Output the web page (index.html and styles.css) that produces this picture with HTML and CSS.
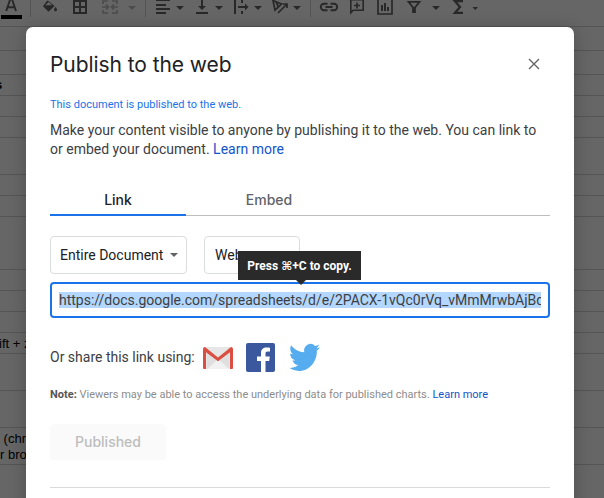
FILE: index.html
```html
<!DOCTYPE html>
<html lang="en">
<head>
<meta charset="utf-8">
<title>Publish to the web</title>
<link rel="stylesheet" href="styles.css">
</head>
<body>
<div class="sheet">
  <div class="toolbar">
    <svg width="30" viewBox="0 0 30 26"><path d="M6.2 11 10.3-1h1.6L16 11M7.8 7.2h6.6" fill="none" stroke="#282828" stroke-width="1.9"/><path d="M1 15h21v4H1z" fill="#000"/></svg>
    <svg width="36" viewBox="30 0 36 26"><path d="M30 0h1v17h-1z" fill="#555"/><path d="M46-1 54.5 6 48.5 11.8 43 6.2 48-.5z"/><path d="m45.2 5.3 3.5-3.4 3.3 3.4z" fill="#666"/><path d="M55.5 7c1 1.300 1.500 2 1.500 2.700a1.500 1.500 0 0 1-3 0c0-.7.500-1.400 1.500-2.700z"/></svg>
    <svg width="30" viewBox="66 0 30 26"><path d="M74 1h12v12H74zM80 0v14M73 7h14" fill="none" stroke="#282828" stroke-width="2"/></svg>
    <svg class="faded" width="49" viewBox="96 0 49 26"><path d="M108 1h-5v3m9-3h5v3m-14 6v3h5m4 0h5v-3M102 7h6m4 0h6M106 4.500 108.500 7 106 9.500M114 4.500 111.500 7l2.500 2.500" fill="none" stroke="#4c4c4c" stroke-width="1.700"/><path d="M128 6h8l-4 4z" fill="#4c4c4c"/></svg>
    <svg width="45" viewBox="145 0 45 26"><path d="M145 0h1v17h-1z" fill="#555"/><path d="M156 0h14v1h-14zM156 4h10v2h-10zM156 8h14v2h-14zM156 12h10v2h-10zM176 6h8l-4 4z"/></svg>
    <svg width="38" viewBox="190 0 38 26"><path d="M196 12h12v2h-12zM201 0h2v6h3l-4 4-4-4h3zM215 6h8l-4 4z"/></svg>
    <svg width="39" viewBox="228 0 39 26"><path d="M234 0h2v14h-2zM241 0h2v3h-2zM241 11h2v3h-2zM238 6h7V3.500l3.500 3.500-3.500 3.500V8h-7zM254 6h8l-4 4z"/></svg>
    <svg width="43" viewBox="267 0 43 26"><path d="m273 .5 8.500 3.500-6.500 6zM276 1.600l2 4.800M278 13l8-8M283 4h4v4" fill="none" stroke="#282828" stroke-width="1.700"/><path d="M293 6h8l-4 4z"/></svg>
    <svg width="35" viewBox="310 0 35 26"><path d="M310 0h1v17h-1z" fill="#555"/><path d="M327.500 3.800H324a3.200 3.200 0 0 0 0 6.400h3.500m3-6.400h3.500a3.200 3.200 0 0 1 0 6.400h-3.500M325.500 7h7" fill="none" stroke="#282828" stroke-width="1.900"/></svg>
    <svg width="27" viewBox="345 0 27 26"><path d="M350.800-.2h12.400v10.500h-10l-2.400 2.400zM354 5.500h6m-3-3v6" fill="none" stroke="#282828" stroke-width="1.600"/></svg>
    <svg width="28" viewBox="372 0 28 26"><path d="M378-1h14v15h-14z" fill="none" stroke="#282828" stroke-width="1.700"/><path d="M381 5h2v6h-2zM384 3h2v8h-2zM387 7h2v4h-2z"/></svg>
    <svg width="47" viewBox="400 0 47 26"><path d="M408.500 1.800h11L415 7.500V12h-2V7.500z" fill="none" stroke="#282828" stroke-width="1.800"/><path d="M413 7h2v6h-2zM432 6h8l-4 4z"/></svg>
    <svg width="40" viewBox="447 0 40 26"><path d="M463 1.200h-8l5 5.800-5 5.800h8" fill="none" stroke="#282828" stroke-width="2.300"/><path d="M472.500 7h5.500l-2.700 3z"/></svg>
  </div>
  <div class="row h24"></div>
  <div class="row h24"></div>
  <div class="row h21"><span class="end">s</span></div>
  <div class="row h21"></div>
  <div class="row h21"></div>
  <div class="row h37"></div>
  <div class="row h21"></div>
  <div class="row h21"></div>
  <div class="row h53"></div>
  <div class="row h21"></div>
  <div class="row h21"></div>
  <div class="row h21"></div>
  <div class="row h21"><span class="shift">ift + z</span></div>
  <div class="row h37"></div>
  <div class="row h37"></div>
  <div class="row h37"><span class="chrome">&nbsp;(chrome<br>r browser</span></div>
  <div class="row h34"></div>
</div>
<div class="dialog">
  <div class="head"><h1>Publish to the web</h1>
    <svg class="close" viewBox="0 0 12 12"><path d="m1 1 10 10M11 1 1 11"/></svg></div>
  <p class="status">This document is published to the web.</p>
  <p class="desc">Make your content visible to anyone by publishing it to the web. You can link to<br>or embed your document. <a>Learn more</a></p>
  <div class="tabs"><div class="tab active">Link</div><div class="tab second">Embed</div></div>
  <div class="selects"><div class="select doc"><span>Entire Document</span><i></i></div><div class="select web"><span>Web page</span></div>
    <div class="tip"><span>Press ⌘+C to copy.</span></div></div>
  <div class="url"><div class="clip"><span>https://docs.google.com/spreadsheets/d/e/2PACX-1vQc0rVq_vMmMrwbAjBd</span></div></div>
  <div class="share"><span class="or">Or share this link using:</span>
    <svg class="gmail" viewBox="0 0 30 23"><path d="M1 2Q1 0 3 0h24q2 0 2 2v19q0 1-1 1H2q-1 0-1-1z" fill="#e6e6e6"/><path d="M4 22 15 12l12 10z" fill="#f1f1f1"/><path d="m4 4 11 10L26 4v18L15 12 4 22z" fill="#dcdcdc" opacity=".65"/><path d="M0 2Q0 0 2 0l13 10.500L28 0q2 0 2 2v19q0 1-1 1h-2V5.200L15 14.200 3 5.200V22H1q-1 0-1-1z" fill="#db4f43"/></svg>
    <svg class="fb" viewBox="0 0 29 29"><rect width="29" height="29" rx="2" fill="#3b579d"/><path d="M15 29V18h-4v-4.500h4V10c0-3.600 2.200-5.500 5.500-5.500 1.500 0 2.800.1 3.500.2v3.900h-2.300c-1.800 0-2.200.9-2.200 2.200v2.700h4.300l-.6 4.500h-3.700v11z" fill="#fff"/></svg>
    <svg class="tw" viewBox="0 3 24 18.800" preserveAspectRatio="none"><path fill="#55acee" d="M24 4.557a9.830 9.830 0 0 1-2.828.775 4.932 4.932 0 0 0 2.165-2.724 9.864 9.864 0 0 1-3.127 1.195 4.916 4.916 0 0 0-8.384 4.482C7.691 8.094 4.066 6.130 1.640 3.161a4.822 4.822 0 0 0-.666 2.475c0 1.710.87 3.213 2.188 4.096a4.904 4.904 0 0 1-2.228-.616v.061a4.923 4.923 0 0 0 3.946 4.827 4.996 4.996 0 0 1-2.212.085 4.936 4.936 0 0 0 4.604 3.417A9.867 9.867 0 0 1 0 19.540a13.995 13.995 0 0 0 7.548 2.212c9.142 0 14.307-7.721 13.995-14.646A10.025 10.025 0 0 0 24 4.557z"/></svg>
  </div>
  <p class="note"><b>Note:</b> Viewers may be able to access the underlying data for published charts. <a>Learn more</a></p>
  <div class="button">Published</div>
  <div class="rule"></div>
</div>
</body>
</html>
```
FILE: styles.css
```css
* { box-sizing: border-box; }
html, body { margin: 0; width: 604px; height: 498px; overflow: hidden; background: #666; }
body { position: relative; font-family: Roboto, "Liberation Sans", sans-serif; font-size: 14px; white-space: nowrap; }
h1, p { margin: 0; font-weight: 400; }
.toolbar { display: flex; height: 26px; overflow: hidden; }
.toolbar svg { flex: none; height: 26px; fill: #282828; }
.row { border-top: 1px solid #555; font: 13px/15px "Liberation Sans", sans-serif; color: #000; overflow: hidden; }
.h21 { height: 21px; } .h24 { height: 24px; } .h34 { height: 34px; } .h37 { height: 37px; } .h53 { height: 53px; }
.row span { display: block; }
.end { margin: 2px 0 0 -5px; font-weight: 700; }
.shift { margin: 3px 0 0 -1px; }
.chrome { margin: 3px 0 0 0; line-height: 16px; }
.dialog { position: absolute; left: 26px; top: 27px; width: 548px; height: 490px; padding: 0 24px; background: #fff; border-radius: 7px; box-shadow: 0 2px 18px rgba(0,0,0,.23); color: #3c4043; }
.head { display: flex; justify-content: space-between; height: 71px; padding-top: 24px; }
h1 { font: 400 21px/28px Inter, Roboto, sans-serif; letter-spacing: -.07px; color: #202124; }
.close { width: 12px; height: 12px; margin: 7px 10px 0 0; stroke: #666; stroke-width: 1.4; }
.status { font-size: 11px; line-height: 14px; color: #1a73e8; }
.desc { margin-top: 9px; line-height: 19px; height: 38px; }
a { color: #1155cc; }
.tabs { display: flex; height: 37px; margin-top: 20px; border-bottom: 1px solid #bdbdbd; font: 500 14px/18px Inter, Roboto, sans-serif; }
.tab { width: 136px; height: 37px; padding-top: 12px; text-align: center; color: #5f6368; }
.tab.active { color: #202124; border-bottom: 2px solid #1a73e8; }
.tab.second { width: 166px; }
.selects { position: relative; display: flex; gap: 17px; margin-top: 20px; }
.select { display: flex; align-items: center; height: 38px; border: 1px solid #dadce0; border-radius: 4px; color: #202124; }
.doc { width: 137px; padding-left: 9px; gap: 7px; }
.doc i { border: 4px solid transparent; border-top-color: #5f6368; border-bottom: 0; }
.web { width: 96px; padding-left: 10px; }
.tip { position: absolute; left: 188px; top: 15px; width: 123px; height: 29px; background: #2a2a2a; color: #fff; font: 700 12px/30px Roboto, "DejaVu Sans", sans-serif; text-align: center; z-index: 2; }
.tip::after { content: ""; position: absolute; left: 58px; top: 29px; border: 5px solid transparent; border-top-color: #2a2a2a; border-bottom: 0; }
.url { height: 36px; margin-top: 8px; padding: 8px 7px; border: 2px solid #1a73e8; border-radius: 4px; }
.clip { overflow: hidden; height: 16px; line-height: 16px; width: 482px; background: #b3d7ff; }
.share { display: flex; align-items: flex-start; height: 40px; margin-top: 25px; }
.or { width: 153px; line-height: 28px; }
.gmail { width: 30px; height: 23px; margin-top: 4px; }
.fb { width: 29px; height: 29px; margin-left: 13px; }
.tw { width: 31px; height: 26px; margin: 2px 0 0 14px; overflow: visible; }
.note { margin-top: 5px; font-size: 11px; line-height: 14px; color: #8c8c8c; }
.note b { color: #555; }
.button { width: 116px; height: 36px; margin-top: 22px; border-radius: 4px; background: #fafafa; color: #bdbdbd; font: 500 14px/36px Inter, Roboto, sans-serif; text-align: center; }
.rule { height: 1px; margin-top: 27px; background: #dadada; }
```
